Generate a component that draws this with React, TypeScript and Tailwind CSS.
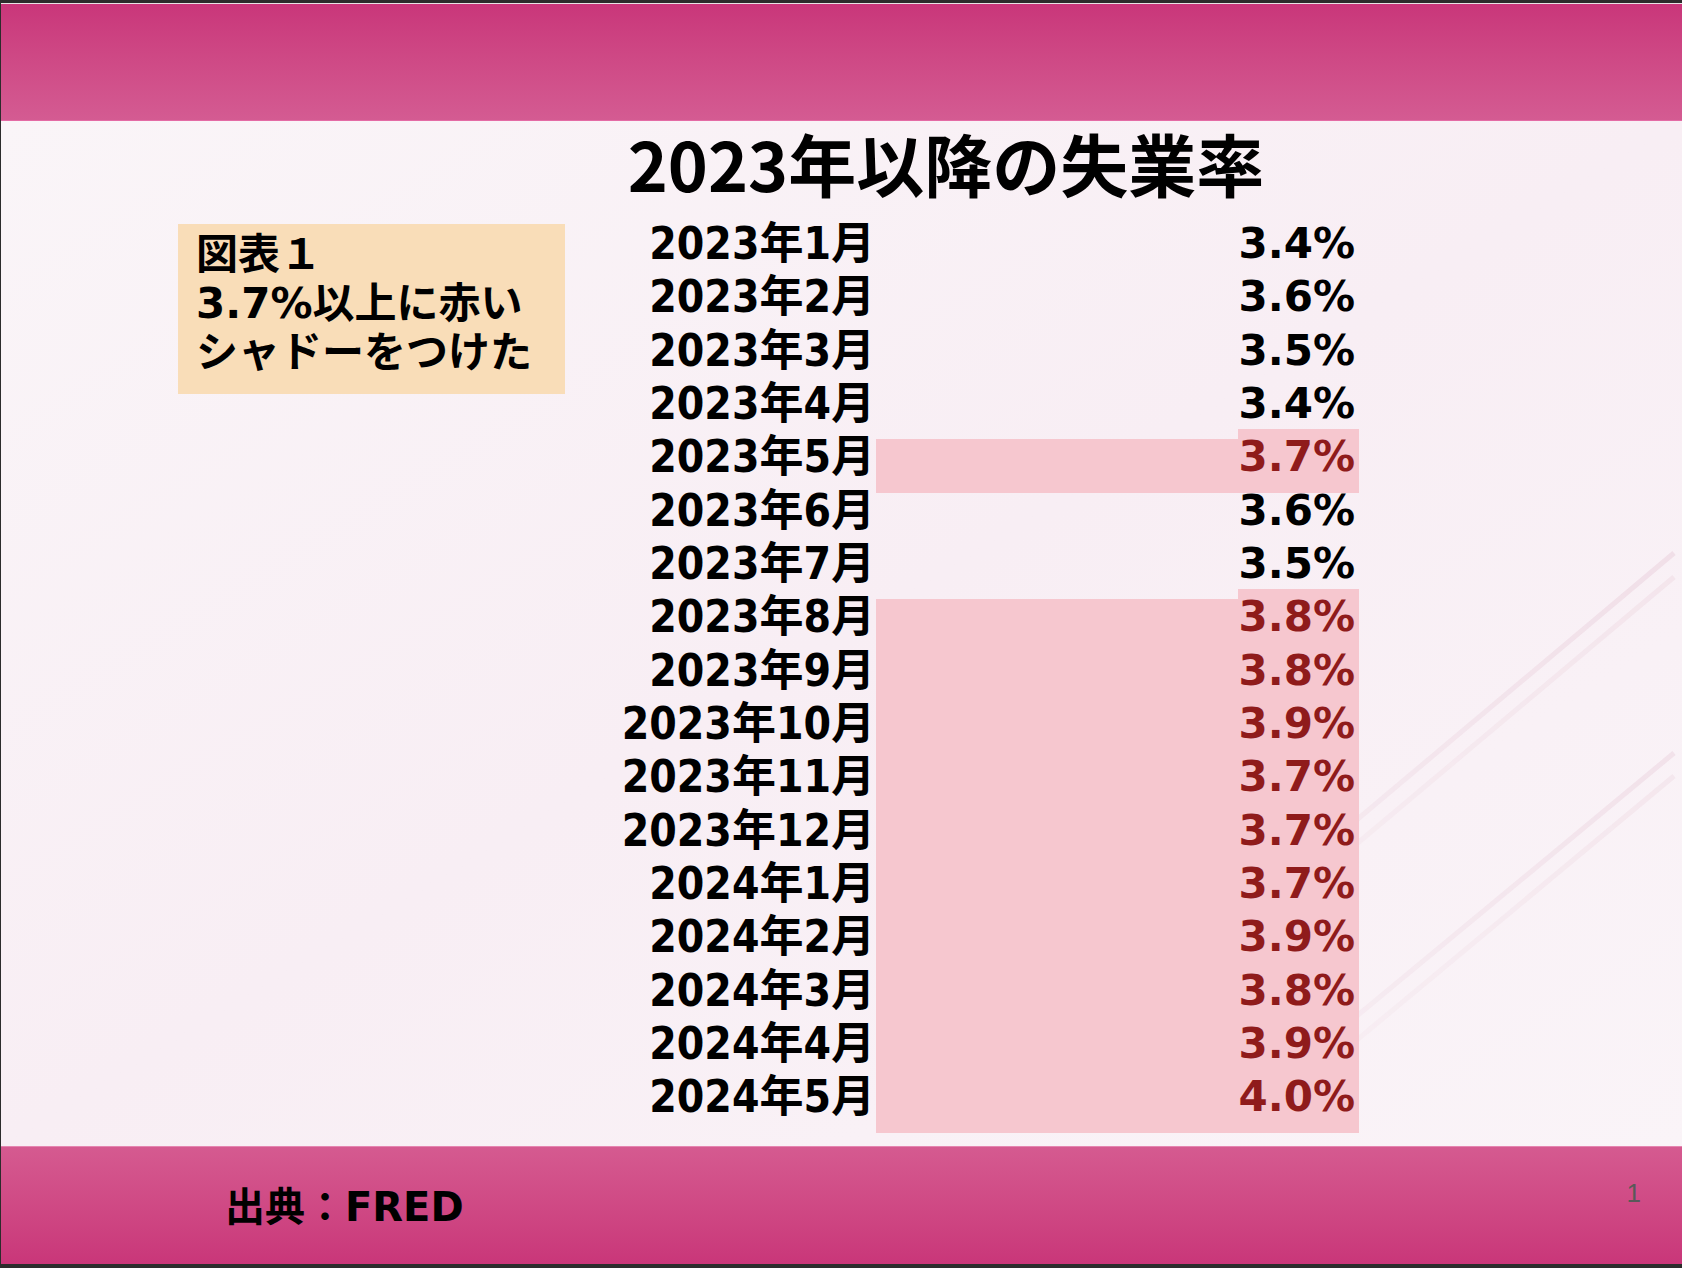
const rows: { label: string; value: string }[] = [
  { label: "2023年1月", value: "3.4" },
  { label: "2023年2月", value: "3.6" },
  { label: "2023年3月", value: "3.5" },
  { label: "2023年4月", value: "3.4" },
  { label: "2023年5月", value: "3.7" },
  { label: "2023年6月", value: "3.6" },
  { label: "2023年7月", value: "3.5" },
  { label: "2023年8月", value: "3.8" },
  { label: "2023年9月", value: "3.8" },
  { label: "2023年10月", value: "3.9" },
  { label: "2023年11月", value: "3.7" },
  { label: "2023年12月", value: "3.7" },
  { label: "2024年1月", value: "3.7" },
  { label: "2024年2月", value: "3.9" },
  { label: "2024年3月", value: "3.8" },
  { label: "2024年4月", value: "3.9" },
  { label: "2024年5月", value: "4.0" },
];

const isHigh = (v: string) => parseFloat(v) >= 3.7;

const jpFont = "font-['DejaVu_Sans','Noto_Sans_CJK_JP',sans-serif] font-bold";

function DiagonalLines() {
  // page coords shifted by body origin (1, 121)
  const ox = 1;
  const oy = 121;
  const lines = [
    { x1: 1674, y1: 553, x2: 1290, y2: 876, c: "#f0dee7" },
    { x1: 1674, y1: 577, x2: 1290, y2: 900, c: "#f3e4eb" },
    { x1: 1674, y1: 753, x2: 1270, y2: 1088, c: "#f0dee7" },
    { x1: 1674, y1: 776, x2: 1280, y2: 1104, c: "#f3e4eb" },
  ];
  return (
    <svg className="absolute inset-0 pointer-events-none" width="1681" height="1025">
      <defs>
        <linearGradient id="fade" x1="1" y1="0" x2="0" y2="1">
          <stop offset="0" stopColor="#ffffff" stopOpacity="1" />
          <stop offset="1" stopColor="#ffffff" stopOpacity="0.15" />
        </linearGradient>
        <mask id="m">
          <rect x="1250" y="400" width="431" height="625" fill="url(#fade)" />
        </mask>
      </defs>
      <g mask="url(#m)">
        {lines.map((l, i) => (
          <line
            key={i}
            x1={l.x1 - ox}
            y1={l.y1 - oy}
            x2={l.x2 - ox}
            y2={l.y2 - oy}
            stroke={l.c}
            strokeWidth={5}
          />
        ))}
      </g>
    </svg>
  );
}

export default function App() {
  return (
    <div className="w-[1682px] h-[1268px] bg-[#2c2c2c] pt-[3px] pb-[4px] pl-[1px] flex flex-col">
      <div className="h-[1px] bg-[#e9e4e6]" />
      {/* header band */}
      <div className="h-[117px] bg-gradient-to-b from-[#c9367a] to-[#d45b92] border-b border-[#e46ba5]" />

      {/* body */}
      <div className="relative flex-1 bg-gradient-to-br from-[#faf5f8] via-[#f8eef4] to-[#faf4f8]">
        <DiagonalLines />
        <div className="relative flex flex-col">
          <div className="ml-[599px] w-[692px] text-center font-['Noto_Sans_CJK_JP',sans-serif] font-bold text-[68px] leading-[84px] text-black">
            2023年以降の失業率
          </div>

          <div className="flex mt-[19px] pl-[177px]">
            <div className={`w-[387px] h-[170px] bg-[#f9ddb8] pt-[6px] pl-[18px] text-[42px] leading-[49px] text-black ${jpFont}`}>
              <div>図表１</div>
              <div>3.7%以上に赤い</div>
              <div>シャドーをつけた</div>
            </div>

            <div className={`ml-[35px] pt-[2px] flex flex-col text-black ${jpFont}`}>
              {rows.map((r, i) => {
                const hi = isHigh(r.value);
                const first = hi && (i === 0 || !isHigh(rows[i - 1].value));
                return (
                  <div key={r.label} className="flex h-[53.33px]">
                    <div className="w-[275px] text-right text-[44px] leading-[36px] whitespace-nowrap [font-stretch:condensed]">
                      {r.label}
                    </div>
                    <div className={`ml-[1px] w-[362px] h-full ${hi ? "bg-[#f6c7cf]" : ""}`} />
                    <div
                      className={`relative w-[121px] h-full pr-[4px] text-right text-[42px] leading-[36px] whitespace-nowrap ${
                        hi ? "bg-[#f6c7cf] text-[#8f1b1b]" : ""
                      }`}
                    >
                      {first && <span className="absolute left-0 right-0 -top-[10px] h-[10px] bg-[#f6c7cf]" />}
                      {r.value}%
                    </div>
                  </div>
                );
              })}
            </div>
          </div>
        </div>
      </div>

      {/* footer band */}
      <div className="h-[118px] bg-gradient-to-b from-[#d55a90] to-[#c93679] border-t border-[#e585b0] flex justify-between pl-[224px] pr-[41px]">
        <div className={`mt-[36px] text-[40px] leading-[48px] text-black ${jpFont}`}>出典：FRED</div>
        <div className="mt-[33px] font-['Liberation_Sans',sans-serif] text-[26px] leading-[26px] text-[#595959]">
          1
        </div>
      </div>
    </div>
  );
}
